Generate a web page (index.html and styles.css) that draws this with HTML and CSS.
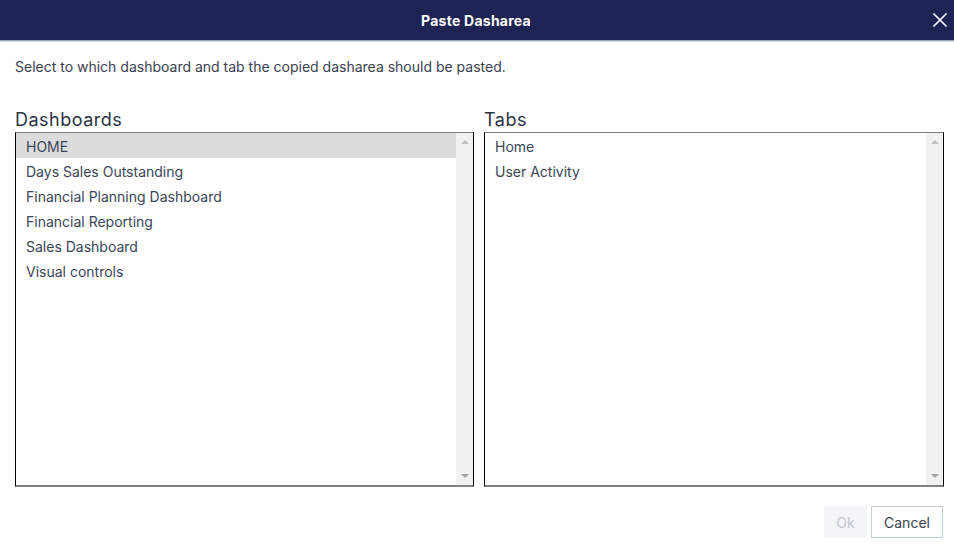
FILE: index.html
```html
<!DOCTYPE html>
<html>
<head>
<meta charset="utf-8">
<link rel="stylesheet" href="styles.css">
</head>
<body>
<div class="dialog">
  <div class="header">
    <span class="title">Paste Dasharea</span>
    <button class="close" aria-label="Close">
      <svg width="16" height="16" viewBox="0 0 16 16"><path d="M1.5 1.5 L14.5 14.5 M14.5 1.5 L1.5 14.5" stroke="#fff" stroke-width="1.6" fill="none"/></svg>
    </button>
  </div>
  <div class="content">
    <p class="desc">Select to which dashboard and tab the copied dasharea should be pasted.</p>
    <div class="columns">
      <div class="col">
        <div class="label">Dashboards</div>
        <div class="listbox">
          <ul class="items">
            <li class="selected">HOME</li>
            <li>Days Sales Outstanding</li>
            <li>Financial Planning Dashboard</li>
            <li>Financial Reporting</li>
            <li>Sales Dashboard</li>
            <li>Visual controls</li>
          </ul>
          <div class="scrollbar"><span class="arrow up"></span><span class="arrow down"></span></div>
        </div>
      </div>
      <div class="col">
        <div class="label">Tabs</div>
        <div class="listbox">
          <ul class="items">
            <li>Home</li>
            <li>User Activity</li>
          </ul>
          <div class="scrollbar"><span class="arrow up"></span><span class="arrow down"></span></div>
        </div>
      </div>
    </div>
    <div class="footer">
      <button class="btn ok" disabled>Ok</button>
      <button class="btn cancel">Cancel</button>
    </div>
  </div>
</div>
</body>
</html>
```

FILE: styles.css
```css
html, body {
  margin: 0;
  padding: 0;
  background: #fff;
}
body {
  font-family: Inter, "Noto Sans", sans-serif;
  width: 954px;
  height: 546px;
  overflow: hidden;
}
.dialog {
  width: 954px;
}
.header {
  height: 40px;
  background: #1e2353;
  border-bottom: 1px solid #9aa2bd;
  box-shadow: 0 1px 0 #d9dce6;
  display: flex;
  align-items: center;
  justify-content: center;
  position: relative;
}
.title {
  color: #fff;
  font-weight: 700;
  font-size: 14px;
  letter-spacing: 0.25px;
  margin-left: -2px;
}
.close {
  position: absolute;
  right: 6px;
  top: 12px;
  width: 16px;
  height: 16px;
  padding: 0;
  border: 0;
  background: transparent;
  display: flex;
}
.content {
  padding: 0 10px 0 15px;
}
.desc {
  margin: 18px 0 0;
  font-size: 14px;
  line-height: 16px;
  color: #3a4152;
}
.columns {
  display: flex;
  gap: 10px;
  margin-top: 34px;
}
.col {
  display: flex;
  flex-direction: column;
}
.col:first-child {
  width: 459px;
}
.col:last-child {
  width: 460px;
}
.label {
  font-size: 18px;
  line-height: 22px;
  color: #2b3345;
  letter-spacing: 0.5px;
  margin-bottom: 1px;
}
.listbox {
  height: 352px;
  border-top: 1px solid #7d7d7d;
  border-left: 1px solid #000;
  border-right: 1px solid #000;
  border-bottom: 2px solid #808080;
  display: flex;
}
.items {
  list-style: none;
  margin: 0;
  padding: 0;
  flex: 1;
}
.items li {
  height: 25px;
  box-sizing: border-box;
  padding-top: 2px;
  line-height: 23px;
  padding-left: 10px;
  font-size: 14px;
  color: #3b4558;
}
.items li.selected {
  background: #dcdcdc;
}
.scrollbar {
  width: 17px;
  background: #f1f1f1;
  display: flex;
  flex-direction: column;
  justify-content: space-between;
  align-items: center;
  padding: 7px 0;
}
.arrow {
  width: 0;
  height: 0;
  border-left: 4px solid transparent;
  border-right: 4px solid transparent;
}
.arrow.up {
  border-bottom: 4px solid #c1c1c1;
}
.arrow.down {
  border-top: 4px solid #a3a3a3;
}
.footer {
  display: flex;
  justify-content: flex-end;
  gap: 4px;
  margin-top: 19px;
  margin-right: 1px;
}
.btn {
  font-family: Inter, "Noto Sans", sans-serif;
  font-size: 14px;
  height: 32px;
  padding: 0 12px;
  border-radius: 0;
}
.ok {
  background: #f3f5f8;
  border: 1px solid #f3f5f8;
  color: #bfc5cf;
  width: 43px;
  padding: 0;
}
.cancel {
  background: #fff;
  border: 1px solid #c5cde0;
  color: #3a4152;
  width: 72px;
  padding: 0;
}
```
